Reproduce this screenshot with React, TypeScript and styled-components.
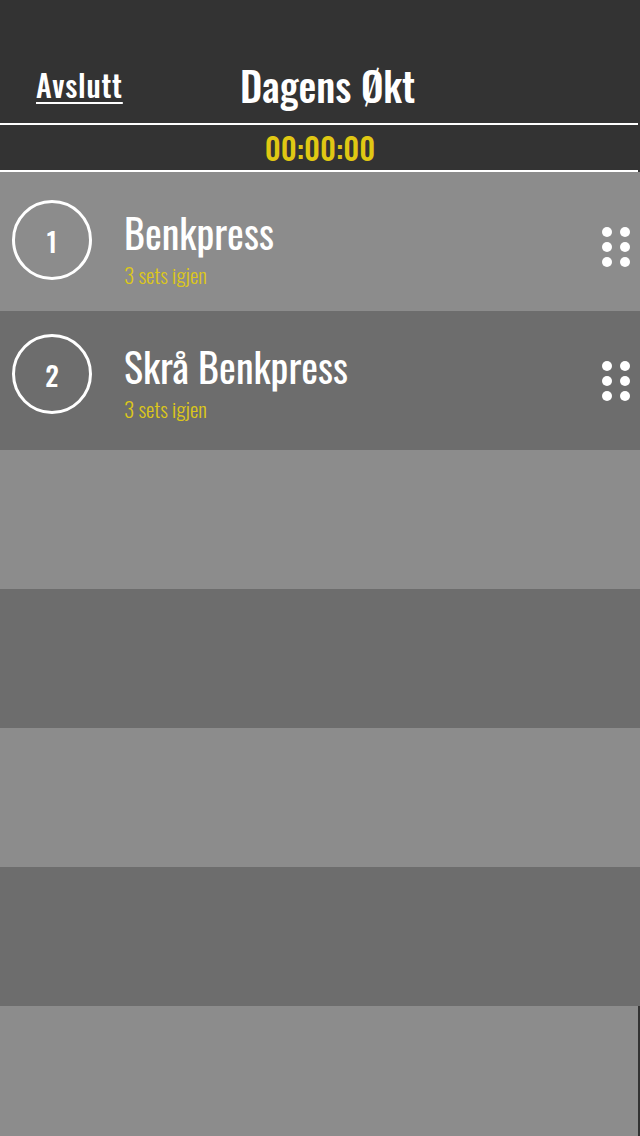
import React from 'react';
import styled, { createGlobalStyle } from 'styled-components';

const GlobalStyle = createGlobalStyle`
  html, body {
    margin: 0;
    padding: 0;
    background: #333333;
  }
  * {
    box-sizing: border-box;
  }
`;

const font = `'Oswald', 'Liberation Sans Narrow', 'DejaVu Sans Condensed', sans-serif`;

const Screen = styled.div`
  width: 640px;
  height: 1136px;
  display: flex;
  flex-direction: column;
  background: #333333;
  font-family: ${font};
  color: #ffffff;
  overflow: hidden;
`;

const Header = styled.header`
  height: 123px;
  display: grid;
  grid-template-columns: 240px 1fr;
  align-items: end;
  padding-bottom: 18px;
`;

const QuitLink = styled.a`
  justify-self: start;
  margin-left: 36px;
  margin-bottom: 5px;
  font-size: 30px;
  font-weight: 500;
  line-height: 1;
  letter-spacing: 0.8px;
  color: #ffffff;
  text-decoration: underline;
  text-underline-offset: 4px;
  text-decoration-thickness: 2px;
  cursor: pointer;
`;

const Title = styled.h1`
  margin: 0;
  font-size: 40px;
  font-weight: 500;
  line-height: 1;
`;

const Divider = styled.div`
  height: 2px;
  width: 638px;
  background: #ffffff;
`;

const TimerBar = styled.div`
  height: 45px;
  display: flex;
  align-items: center;
  justify-content: center;
  color: #e0c813;
  font-size: 30px;
  font-weight: 500;
`;

const List = styled.div`
  flex: 1;
  display: flex;
  flex-direction: column;
`;

const Row = styled.div<{ $dark: boolean; $top?: number }>`
  height: 139px;
  flex-shrink: 0;
  display: flex;
  align-items: flex-start;
  padding-top: ${(p) => p.$top ?? 0}px;
  background: ${(p) => (p.$dark ? '#6d6d6d' : '#8c8c8c')};
`;

const Filler = styled.div`
  flex: 1;
  margin-right: 2px;
  background: #8c8c8c;
`;

const NumberCircle = styled.div`
  width: 80px;
  height: 80px;
  margin-left: 12px;
  border: 3px solid #ffffff;
  border-radius: 50%;
  display: flex;
  align-items: center;
  justify-content: center;
  font-size: 27px;
  font-weight: 500;
  padding-top: 2px;
  flex-shrink: 0;
`;

const Info = styled.div`
  flex: 1;
  display: flex;
  flex-direction: column;
  margin-left: 32px;
  padding-top: 8px;
`;

const Name = styled.div`
  font-size: 40px;
  line-height: 48px;
`;

const SetsLeft = styled.div`
  margin-top: 7px;
  font-size: 21px;
  line-height: 24px;
  font-weight: 300;
  color: #dcc71a;
`;

const Handle = styled.div`
  display: grid;
  grid-template-columns: repeat(2, 10px);
  grid-auto-rows: 10px;
  column-gap: 8px;
  row-gap: 5px;
  margin-top: 27px;
  margin-right: 10px;

  span {
    width: 10px;
    height: 10px;
    border-radius: 50%;
    background: #ffffff;
  }
`;

const exercises = [
  { id: 1, name: 'Benkpress', sets: 3 },
  { id: 2, name: 'Skrå Benkpress', sets: 3 },
];

export default function App() {
  const emptyRows = 4;

  return (
    <>
      <GlobalStyle />
      <Screen>
        <Header>
          <QuitLink>Avslutt</QuitLink>
          <Title>Dagens Økt</Title>
        </Header>
        <Divider />
        <TimerBar>00:00:00</TimerBar>
        <Divider />
        <List>
          {exercises.map((ex, i) => (
            <Row key={ex.id} $dark={i % 2 === 1} $top={28 - i * 5}>
              <NumberCircle>{ex.id}</NumberCircle>
              <Info>
                <Name>{ex.name}</Name>
                <SetsLeft>{ex.sets} sets igjen</SetsLeft>
              </Info>
              <Handle>
                {Array.from({ length: 6 }).map((_, d) => (
                  <span key={d} />
                ))}
              </Handle>
            </Row>
          ))}
          {Array.from({ length: emptyRows }).map((_, i) => (
            <Row key={`empty-${i}`} $dark={(i + exercises.length) % 2 === 1} />
          ))}
          <Filler />
        </List>
      </Screen>
    </>
  );
}
